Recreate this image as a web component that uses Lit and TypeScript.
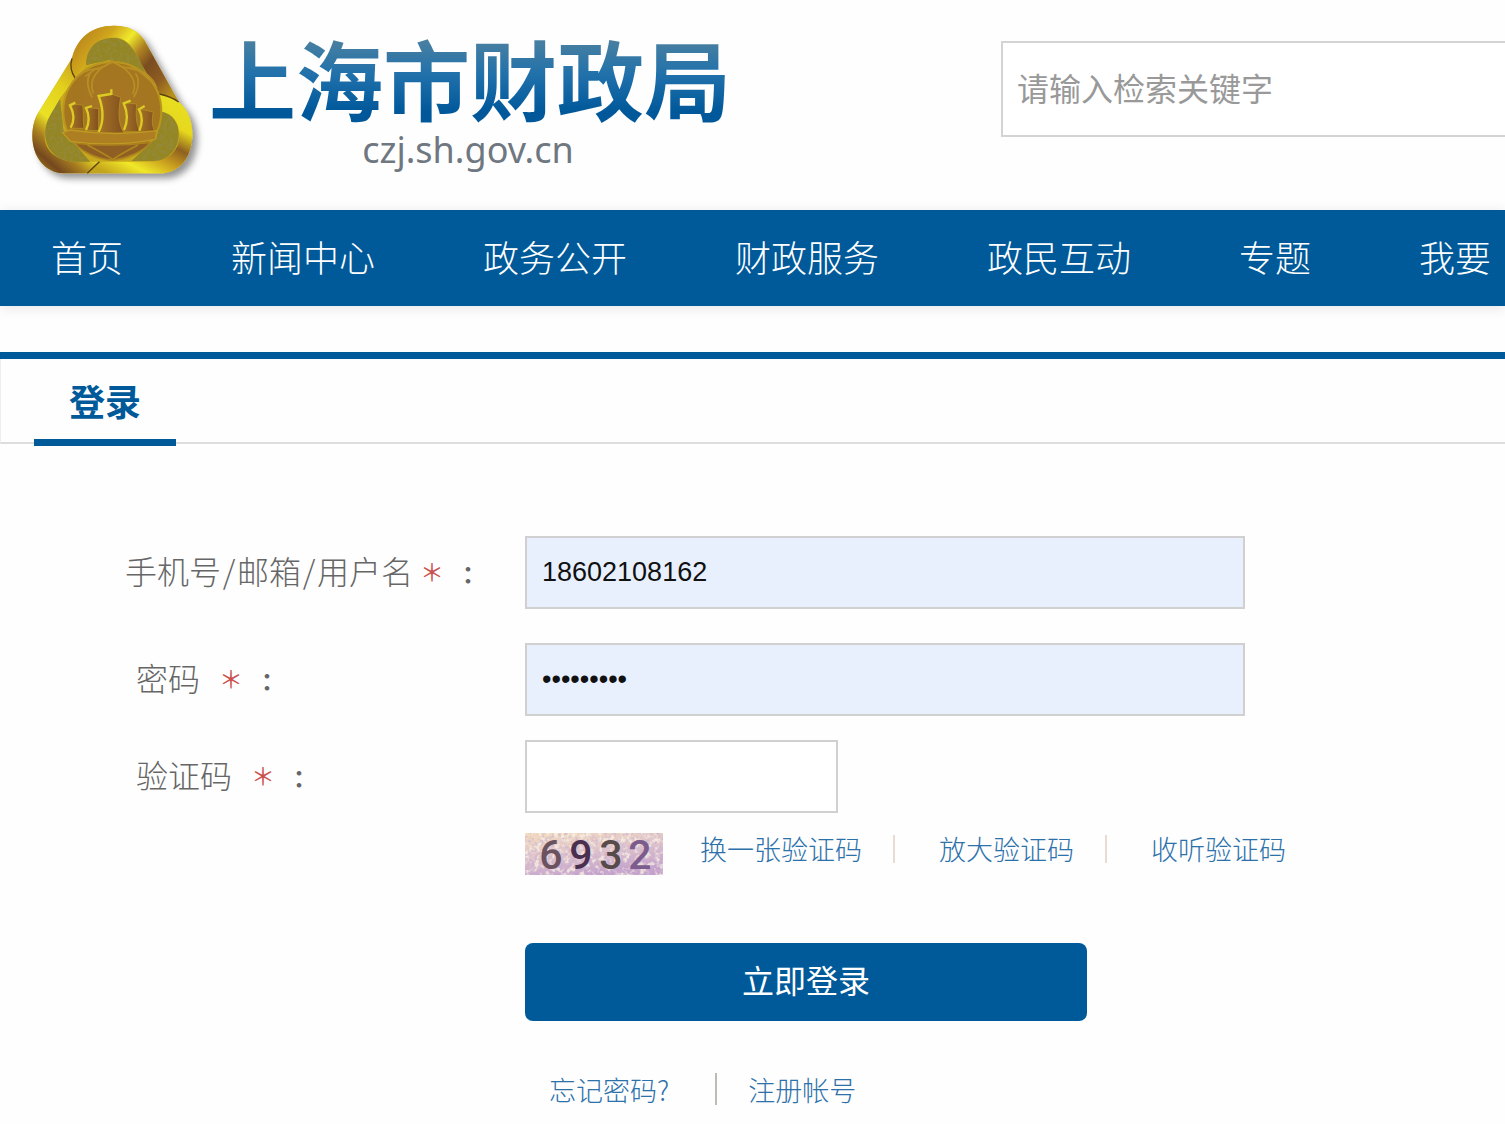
import { LitElement, html, css } from "lit";
import { customElement } from "lit/decorators.js";

@customElement("site-emblem")
export class SiteEmblem extends LitElement {
  static styles = css`
    :host { display: block; flex: none; }
    svg { display: block; width: 192px; height: 168px; }
  `;

  render() {
    return html`
      <svg viewBox="30 30 576 504" aria-hidden="true">
        <defs>
          <linearGradient id="left" x1="0.7" y1="0" x2="0.2" y2="1">
            <stop offset="0" stop-color="#c89a20" />
            <stop offset="0.3" stop-color="#e2d01c" />
            <stop offset="0.6" stop-color="#ebe224" />
            <stop offset="0.76" stop-color="#a87e20" />
            <stop offset="0.9" stop-color="#74481e" />
            <stop offset="1" stop-color="#98701c" />
          </linearGradient>
          <linearGradient id="top" x1="0" y1="0.2" x2="1" y2="0.8">
            <stop offset="0" stop-color="#b8821e" />
            <stop offset="0.22" stop-color="#d0a61c" />
            <stop offset="0.38" stop-color="#f0ea2c" />
            <stop offset="0.52" stop-color="#b08422" />
            <stop offset="0.66" stop-color="#7a4c20" />
            <stop offset="0.84" stop-color="#8e5e22" />
            <stop offset="1" stop-color="#b8901e" />
          </linearGradient>
          <linearGradient id="bottom" x1="0.9" y1="0" x2="0.2" y2="1">
            <stop offset="0" stop-color="#e8e020" />
            <stop offset="0.3" stop-color="#e6d81e" />
            <stop offset="0.48" stop-color="#8e6020" />
            <stop offset="0.64" stop-color="#c89c1e" />
            <stop offset="0.82" stop-color="#f0e828" />
            <stop offset="1" stop-color="#c4a41c" />
          </linearGradient>
          <linearGradient id="tower" x1="0" x2="1">
            <stop offset="0" stop-color="#a87426" />
            <stop offset="1" stop-color="#80501e" />
          </linearGradient>
          <radialGradient id="disc">
            <stop offset="0" stop-color="#a87628" />
            <stop offset="1" stop-color="#a4761e" />
          </radialGradient>
          <filter id="shade" x="-20%" y="-20%" width="150%" height="150%">
            <feDropShadow dx="15" dy="15" stdDeviation="11" flood-color="#000" flood-opacity="0.42" />
          </filter>
          <filter id="grain" x="0" y="0" width="100%" height="100%">
            <feTurbulence type="fractalNoise" baseFrequency="0.1" numOctaves="2" seed="4" />
            <feColorMatrix values="0 0 0 0 0.3  0 0 0 0 0.25  0 0 0 0 0.04  5 0 0 0 -2.2" />
            <feComposite in2="SourceGraphic" operator="in" result="n" />
            <feMerge><feMergeNode in="SourceGraphic" /><feMergeNode in="n" /></feMerge>
          </filter>
        </defs>

        <path filter="url(#shade)" fill="#c8a81e"
          d="M186 145C200 85 245 47 312 47C355 47 385 62 404 92L506 275C535 300 547 335 547 372C547 440 510 490 450 490H160C105 488 67 440 67 378C67 345 76 320 90 300Z" />
        <path fill="url(#left)"
          d="M186 145L90 300C76 320 67 345 67 378C67 440 105 488 160 490H232L268 455L190 455C130 450 100 415 104 370C108 335 125 310 150 265L196 205Z" />
        <path fill="url(#top)"
          d="M186 145C200 85 245 47 312 47C355 47 385 62 404 92L506 275C490 262 470 256 448 252L392 160C375 115 350 82 310 82C262 84 228 110 228 165L196 205C186 185 182 165 186 145Z" />
        <path fill="url(#bottom)"
          d="M448 254C515 260 547 310 547 372C547 440 510 490 450 490H228L275 455H430C480 450 508 420 508 375C508 340 490 312 455 305Z" />

        <g fill="#948624" filter="url(#grain)">
          <path d="M228 165C230 110 262 84 310 84C350 84 375 115 410 195L300 150Z" />
          <path d="M150 268C125 310 104 335 106 375C108 420 140 452 190 455H240L160 360Z" />
          <path d="M455 305C490 312 506 340 506 375C504 425 470 452 430 453H365L440 380Z" />
        </g>

        <path d="M186 145C180 165 184 188 196 205M448 252C475 258 490 264 506 276M268 455L232 490"
          fill="none" stroke="#5c4210" stroke-width="4" />
        <circle cx="307" cy="303" r="147" fill="url(#disc)" stroke="#bb961e" stroke-width="6" />

        <g fill="none" stroke="#b88f24" stroke-width="5">
          <path d="M250 250C232 205 270 170 308 157C350 172 388 210 368 252" />
          <path d="M190 215C215 180 245 175 268 178M240 190C228 210 235 240 246 262" />
          <path d="M350 172C395 175 430 200 440 235M376 190C390 205 386 240 370 262" />
          <path d="M225 200L255 178L285 168L308 153L330 168L385 182L425 215" />
        </g>

        <g fill="url(#tower)" stroke="#b08a20" stroke-width="3">
          <path d="M180 355C194 330 188 305 180 282L218 285C222 310 218 330 222 355Z" />
          <path d="M226 362C238 335 236 315 228 292L266 296V362Z" />
          <path d="M340 365C352 335 350 305 340 278L380 282C378 310 376 335 390 365Z" />
          <path d="M386 367C396 340 394 315 386 296L430 306C426 330 424 345 436 367Z" />
          <path d="M262 370C282 330 276 290 264 256L300 250L332 262C326 300 322 335 342 370Z" />
        </g>
        <g fill="none" stroke="#dccb24" stroke-width="7">
          <path d="M182 353C196 330 190 305 180 286L196 278" />
          <path d="M228 360C240 335 238 315 228 294L246 288" />
          <path d="M266 366C284 330 278 290 266 258L304 252V238" />
          <path d="M342 360C354 335 352 305 341 280L362 272" />
          <path d="M388 362C398 340 396 315 387 298L404 288" />
        </g>

        <path fill="#ad7e22" stroke="#bf9a22" stroke-width="4" d="M158 368L180 360Q310 380 440 362L436 388Q310 412 182 394Z" />
        <path fill="#8f5e22" stroke="#ac821e" stroke-width="4"
          d="M196 400Q310 412 420 398C400 425 350 445 308 450C260 446 216 425 196 400Z" />
        <path d="M232 405Q280 430 308 448Q336 430 384 405" fill="none" stroke="#b0861f" stroke-width="5" />
      </svg>
    `;
  }
}

@customElement("captcha-picture")
export class CaptchaPicture extends LitElement {
  static styles = css`
    :host { display: block; flex: none; }
    svg { display: block; width: 138px; height: 42px; overflow: visible; }
    .digit { font: 500 41px Roboto, sans-serif; }
  `;

  render() {
    return html`
      <svg viewBox="0 0 138 42" role="img" aria-label="6932">
        <defs>
          <linearGradient id="base" x1="0" y1="0" x2="0.4" y2="1">
            <stop offset="0" stop-color="#f4dcbc" />
            <stop offset="0.5" stop-color="#e0c6cc" />
            <stop offset="1" stop-color="#c4a2cc" />
          </linearGradient>
          <filter id="specks" x="0" y="0" width="100%" height="100%">
            <feTurbulence type="fractalNoise" baseFrequency="0.3" numOctaves="2" seed="9" />
            <feColorMatrix values="0 0 0 0 0.6  0 0 0 0 0.44  0 0 0 0 0.64  5 0 0 0 -2.5" />
          </filter>
          <filter id="cream" x="0" y="0" width="100%" height="100%">
            <feTurbulence type="fractalNoise" baseFrequency="0.2" numOctaves="2" seed="21" />
            <feColorMatrix values="0 0 0 0 0.95  0 0 0 0 0.87  0 0 0 0 0.76  5 0 0 0 -2.4" />
          </filter>
        </defs>
        <rect width="138" height="42" fill="url(#base)" />
        <rect width="138" height="42" filter="url(#cream)" opacity="0.8" />
        <rect width="138" height="42" filter="url(#specks)" opacity="0.6" />
        <g class="digit" text-anchor="middle">
          <text x="26" y="36" fill="#6b5261">6</text>
          <text x="56" y="36" fill="#49304f">9</text>
          <text x="86" y="36" fill="#574a4a">3</text>
          <text x="115" y="36" fill="#7c5c8c">2</text>
        </g>
      </svg>
    `;
  }
}

@customElement("app-root")
export class AppRoot extends LitElement {
  static styles = css`
    :host {
      display: block;
      min-height: 100vh;
      overflow-x: hidden;
      background: #fefefe;
      color: #666;
      font-family: "Noto Sans CJK SC", sans-serif;
      font-size: 32px;
      font-weight: 300;
    }
    * { box-sizing: border-box; }
    a { color: #2d71ab; text-decoration: none; white-space: nowrap; }

    .header { display: flex; align-items: flex-start; height: 210px; padding: 20px 0 0 20px; }
    .brand { display: flex; flex: none; width: 714px; color: inherit; }
    .names { display: flex; flex-direction: column; align-items: center; margin-left: -3px; }
    .title {
      margin: 0;
      padding: 8px 0 2px;
      font-size: 87px;
      line-height: 98px;
      font-weight: 700;
      color: transparent;
      background: linear-gradient(#4a80a0 18%, #2171ab 50%, #00589a 85%);
      background-clip: text;
      -webkit-background-clip: text;
      white-space: nowrap;
    }
    .domain { padding-right: 4px; color: #6f7780; font: 400 36px/44px "Noto Sans", sans-serif; }
    .search { flex: 1; min-width: 0; margin: 21px 0 0 267px; }
    .search input {
      display: block;
      width: 100%;
      height: 96px;
      padding: 0 14px 4px;
      border: 2px solid #d3d3d3;
      border-right: 0;
      border-radius: 0;
      background: #fff;
      font: 400 32px "Noto Sans CJK SC", sans-serif;
    }
    .search input::placeholder { color: #999; opacity: 1; }

    .nav {
      display: flex;
      align-items: center;
      gap: 108px;
      height: 96px;
      padding: 0 0 4px 51px;
      background: #005a9a;
      box-shadow: 0 2px 12px rgba(0, 0, 0, 0.1);
      font-size: 36px;
    }
    .nav a { color: #fff; }

    .panel { margin-top: 46px; border-top: 7px solid #005a9a; }
    .tabs { display: flex; height: 85px; padding-left: 33px; border-left: 1px solid #eee; border-bottom: 2px solid #ddd; }
    .tab {
      height: 87px;
      margin: 0;
      padding: 0 35px;
      border-bottom: 7px solid #005a9a;
      color: #005a9a;
      font-size: 36px;
      line-height: 82px;
      font-weight: 700;
    }

    .form { display: grid; grid-template-columns: 400px 1fr; padding: 92px 20px 0 125px; }
    .label { display: flex; align-items: center; height: 73px; padding-bottom: 5px; white-space: nowrap; }
    .label.inset { padding-left: 11px; }
    .slash { display: inline-block; width: 16px; text-align: center; }
    .star { width: 24px; margin-left: 7px; color: #c9504c; font-size: 24px; font-weight: 400; text-align: center; }
    .inset .star { margin-left: 19px; }
    .colon { width: 10px; margin-left: 18px; padding-top: 4px; font-weight: 700; font-size: 24px; }
    .field {
      display: block;
      width: 100%;
      max-width: 720px;
      height: 73px;
      margin: 0 0 34px;
      padding: 0 15px;
      border: 2px solid #d0d0d0;
      border-radius: 0;
      background: #e8f0fe;
      color: #111;
      font: 400 27px "Liberation Sans", Arial, sans-serif;
    }
    .field.password { margin-bottom: 24px; }
    .field.code { max-width: 313px; margin-bottom: 20px; background: #fff; }
    .value { grid-column: 2; }
    .captcha { display: flex; align-items: center; height: 42px; font-size: 27px; }
    .captcha a { padding-bottom: 12px; }
    .captcha a:first-of-type { margin-left: 37px; }
    .bar { width: 2px; height: 28px; margin: 0 44px 10px 31px; background: #e6dcd4; }
    .submit {
      display: block;
      width: 100%;
      max-width: 562px;
      height: 78px;
      margin-top: 68px;
      padding: 0 0 6px;
      border: 0;
      border-radius: 8px;
      background: #005a9a;
      color: #fff;
      font: 400 32px "Noto Sans CJK SC", sans-serif;
    }
    .more { display: flex; align-items: center; height: 40px; margin-top: 48px; padding-left: 24px; font-size: 27px; }
    .more .bar { height: 32px; margin: 0 31px 0 46px; background: #bcbcb4; }
  `;

  private navItems = ["首页", "新闻中心", "政务公开", "财政服务", "政民互动", "专题", "我要"];

  render() {
    return html`
      <header class="header">
        <a class="brand" href="#">
          <site-emblem></site-emblem>
          <div class="names">
            <h1 class="title">上海市财政局</h1>
            <div class="domain">czj.sh.gov.cn</div>
          </div>
        </a>
        <form class="search" role="search">
          <input type="search" aria-label="请输入检索关键字" placeholder="请输入检索关键字" />
        </form>
      </header>

      <nav class="nav">${this.navItems.map((item) => html`<a href="#">${item}</a>`)}</nav>

      <main class="panel">
        <div class="tabs"><h2 class="tab">登录</h2></div>
        <form class="form">
          <label class="label" for="user">
            <span>手机号<span class="slash">/</span>邮箱<span class="slash">/</span>用户名</span>
            <span class="star">＊</span><span class="colon">：</span>
          </label>
          <input class="field" id="user" type="text" value="18602108162" />

          <label class="label inset" for="password">
            <span>密码</span><span class="star">＊</span><span class="colon">：</span>
          </label>
          <input class="field password" id="password" type="password" value="123456789" />

          <label class="label inset" for="code">
            <span>验证码</span><span class="star">＊</span><span class="colon">：</span>
          </label>
          <input class="field code" id="code" type="text" />

          <div class="value captcha">
            <captcha-picture></captcha-picture>
            <a href="#">换一张验证码</a><span class="bar"></span>
            <a href="#">放大验证码</a><span class="bar"></span>
            <a href="#">收听验证码</a>
          </div>
          <button class="value submit" type="button">立即登录</button>
          <div class="value more">
            <a href="#">忘记密码?</a><span class="bar"></span><a href="#">注册帐号</a>
          </div>
        </form>
      </main>
    `;
  }
}
